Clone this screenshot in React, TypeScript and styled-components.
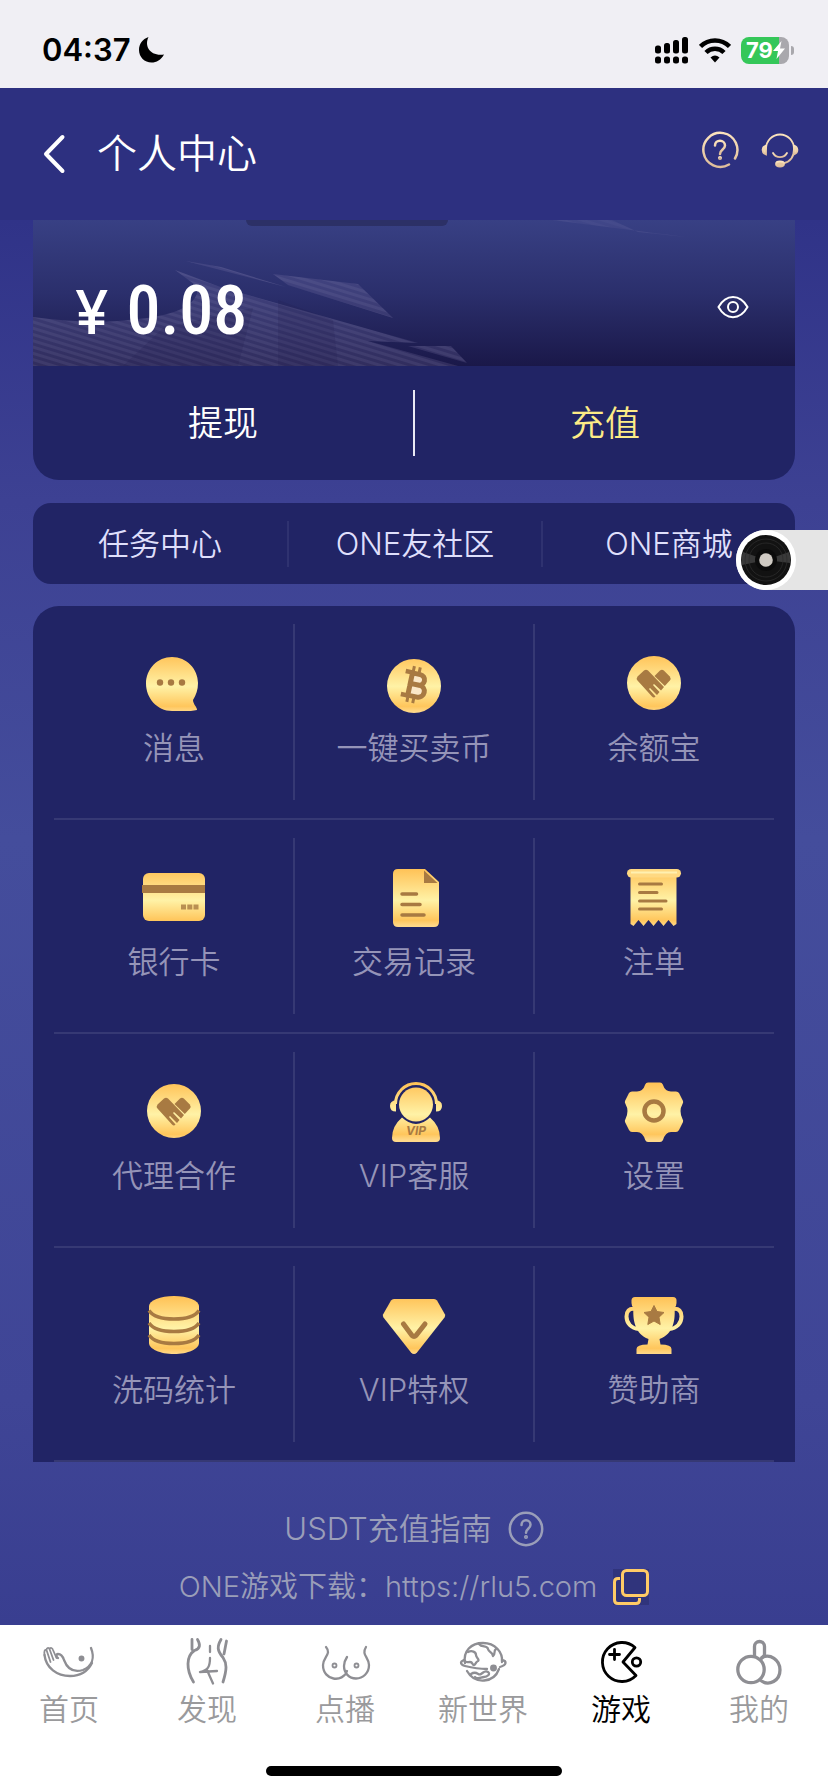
import React from "react";
import styled, { createGlobalStyle, css } from "styled-components";

const GlobalStyle = createGlobalStyle`
  *, *::before, *::after { box-sizing: border-box; }
  body {
    margin: 0;
    background: #ffffff;
    font-family: Inter, "Noto Sans CJK SC", sans-serif;
  }
  button { font: inherit; color: inherit; background: none; border: 0; padding: 0; cursor: pointer; }
  a { color: inherit; text-decoration: none; }
  svg { display: block; flex: none; }
`;

const panel = "#212465";
const hairline = "#363974";

const Page = styled.div`
  position: relative;
  display: flex;
  flex-direction: column;
  min-height: 100vh;
  font-weight: 350;
`;

const StatusBar = styled.div`
  display: flex;
  align-items: center;
  justify-content: space-between;
  height: 88px;
  padding: 12px 34px 0 42px;
  background: #f0eff4;
  color: #000;
`;

const StatusGroup = styled.div<{ $gap: number }>`
  display: flex;
  align-items: center;
  gap: ${(p) => p.$gap}px;
`;

const Clock = styled.span`
  font-size: 31px;
  line-height: 40px;
  font-weight: 600;
`;

const Battery = styled.div`
  position: relative;
  display: flex;
  align-items: center;
  width: 48px;
  height: 27px;
  margin-right: 5px;
  padding-left: 5px;
  border-radius: 8px;
  background: linear-gradient(90deg, #35c759 79%, #a9a8ad 79%);
  color: #fff;
  font-size: 22px;
  font-weight: 700;
  line-height: 27px;
  &::after {
    content: "";
    position: absolute;
    right: -5px;
    top: 9px;
    width: 3px;
    height: 9px;
    border-radius: 0 4px 4px 0;
    background: #a9a8ad;
  }
`;

const Header = styled.header`
  display: flex;
  align-items: center;
  height: 132px;
  padding: 0 29px 0 40px;
  background: #2d3080;
`;

const IconButton = styled.button`
  display: flex;
  align-items: center;
  justify-content: center;
`;

const Title = styled.h1`
  flex: 1;
  margin: 0 0 0 30px;
  color: #fff;
  font-size: 40px;
  line-height: 48px;
  font-weight: 350;
`;

const HeaderTools = styled.div`
  display: flex;
  gap: 22px;
  padding-bottom: 8px;
`;

const Content = styled.main`
  flex: 1;
  display: flex;
  flex-direction: column;
  padding: 0 33px 18px;
  background: linear-gradient(180deg, #303388 0%, #3d4193 20%, #444d9c 44%, #3f4596 84%, #393e90 100%);
`;

const Wallet = styled.section`
  overflow: hidden;
  border-radius: 0 0 26px 26px;
  background: ${panel};
`;

const Banner = styled.div`
  position: relative;
  display: flex;
  align-items: center;
  justify-content: space-between;
  height: 146px;
  padding: 28px 46px 0 42px;
  overflow: hidden;
  background: linear-gradient(180deg, #384084 0%, #2b2f6c 50%, #1a1849 100%);
`;

const BannerArt = styled.svg`
  position: absolute;
  left: 0;
  bottom: 0;
`;

const BannerTab = styled.span`
  position: absolute;
  top: 0;
  left: 28%;
  width: 202px;
  height: 6px;
  border-radius: 0 0 20px 20px;
  background: #2c3066;
`;

const Balance = styled.div`
  position: relative;
  display: flex;
  align-items: baseline;
  gap: 18px;
  padding-top: 8px;
  color: #fff;
  font-family: "Roboto Condensed", "Liberation Sans Narrow", sans-serif;
  font-weight: 500;
  font-size: 68px;
  line-height: 72px;
`;

const Currency = styled.span`
  font-family: Inter, sans-serif;
  font-size: 60px;
  line-height: 72px;
`;

const Actions = styled.div`
  display: grid;
  grid-template-columns: 1fr 2px 1fr;
  align-items: center;
  height: 114px;
`;

const ActionButton = styled.button<{ $gold?: boolean }>`
  height: 100%;
  font-size: 35px;
  line-height: 48px;
  color: ${(p) => (p.$gold ? "#fdeb86" : "#ffffff")};
`;

const ActionRule = styled.span`
  height: 66px;
  background: #e9e9f4;
`;

const Links = styled.nav`
  display: grid;
  grid-template-columns: repeat(3, 1fr);
  align-items: center;
  height: 81px;
  margin-top: 23px;
  border-radius: 18px;
  background: ${panel};
`;

const QuickLink = styled.a`
  display: flex;
  align-items: center;
  justify-content: center;
  height: 46px;
  color: #dfdffb;
  font-size: 31px;
  line-height: 40px;
  & + & { border-left: 2px solid #2f3270; }
`;

const Menu = styled.section`
  display: grid;
  grid-template-columns: repeat(3, 1fr);
  margin-top: 22px;
  padding: 0 21px;
  border-radius: 26px 26px 0 0;
  background: ${panel};
`;

const MenuCell = styled.a<{ $divided: boolean }>`
  position: relative;
  display: flex;
  flex-direction: column;
  align-items: center;
  height: 214px;
  padding-top: 46px;
  border-bottom: 2px solid ${hairline};
  color: #9594b8;
  font-size: 31px;
  line-height: 40px;
  gap: 12px;
  ${(p) =>
    p.$divided &&
    css`
      &::before {
        content: "";
        position: absolute;
        left: -1px;
        top: 18px;
        bottom: 18px;
        width: 2px;
        background: ${hairline};
      }
    `}
`;

const Notes = styled.footer`
  display: flex;
  flex-direction: column;
  align-items: center;
  gap: 18px;
  padding-top: 47px;
  color: #9a9eb9;
  line-height: 40px;
`;

const Note = styled.div<{ $size: number }>`
  display: flex;
  align-items: center;
  gap: 16px;
  font-size: ${(p) => p.$size}px;
`;

const TabBar = styled.nav`
  display: grid;
  grid-template-columns: repeat(6, 1fr);
  height: 141px;
  padding-top: 12px;
  background: #fff;
`;

const Tab = styled.a<{ $active: boolean }>`
  display: flex;
  flex-direction: column;
  align-items: center;
  gap: 4px;
  font-size: 30px;
  line-height: 40px;
  color: ${(p) => (p.$active ? "#000" : "#9a9a9c")};
  svg { color: ${(p) => (p.$active ? "#000" : "#8e8e93")}; }
`;

const HomeArea = styled.div`
  display: flex;
  justify-content: center;
  height: 26px;
  background: #fff;
`;

const HomeIndicator = styled.span`
  width: 296px;
  height: 10px;
  border-radius: 5px;
  background: #000;
`;

const MusicButton = styled.button`
  position: absolute;
  top: 530px;
  right: 0;
  width: 92px;
  height: 60px;
  border-radius: 30px 0 0 30px;
  background: #e5e5e5;
`;

const BROWN = "#a87a42";
const GOLD = "url(#gold)";

const Defs = () => (
  <svg width="0" height="0" style={{ position: "absolute" }} aria-hidden="true">
    <defs>
      <linearGradient id="gold" gradientUnits="userSpaceOnUse" x1="0" y1="3" x2="0" y2="60">
        <stop offset="0" stopColor="#ffc257" />
        <stop offset="0.55" stopColor="#fff2a6" />
        <stop offset="0.9" stopColor="#ffc65c" />
        <stop offset="1" stopColor="#ffd98a" />
      </linearGradient>
      <linearGradient id="sand" x1="0" y1="0" x2="0" y2="1">
        <stop offset="0" stopColor="#fbe3bd" />
        <stop offset="1" stopColor="#dfbe9b" />
      </linearGradient>
      <pattern id="stripes" width="12" height="6" patternUnits="userSpaceOnUse" patternTransform="rotate(17)">
        <rect width="12" height="6" fill="#8a82b4" fillOpacity="0.2" />
        <rect width="12" height="3" fill="#8f88ba" fillOpacity="0.13" />
      </pattern>
    </defs>
  </svg>
);

const Glyph = ({ children }: { children: React.ReactNode }) => (
  <svg width="64" height="64" viewBox="0 0 64 64" fill={GOLD} aria-hidden="true">
    {children}
  </svg>
);

const ChatGlyph = () => (
  <Glyph>
    <path d="M30 5C44.500 5 56 17 56 31c0 7-2 12-5 17 0 4 4 7 4 10-6 1.500-15 1-25 1C15 59 4 46 4 31.500 4 17 15.500 5 30 5z" />
    <g fill={BROWN}>
      <circle cx="18" cy="30.500" r="3.200" />
      <circle cx="29" cy="30.500" r="3.200" />
      <circle cx="40" cy="30.500" r="3.200" />
    </g>
  </Glyph>
);

const BitcoinGlyph = () => (
  <Glyph>
    <circle cx="32" cy="34" r="27" />
    <g transform="rotate(12 32 33)" fill="none" stroke={BROWN}>
      <path d="M28 21.500h8a5.300 5.300 0 0 1 0 10.700h-8zM28 32.200h9.500a6 6 0 0 1 0 12H28z" fill="#fbe8c8" strokeWidth="5" />
      <path d="M21 21h8M21 44.500h8" strokeWidth="4.500" />
      <path d="M28.500 14.500v6M34.500 14.500v6M28.500 45v6M34.500 45v6" strokeWidth="3" />
    </g>
  </Glyph>
);

const HandsGlyph = () => (
  <Glyph>
    <circle cx="32" cy="31" r="27" />
    <g fill={BROWN}>
      <path d="M15.500 24.500l6.500-6q2-1.500 4 0L42 35l-3 3.500-7-6.500-1 1 6.500 7-2.500 3-7-7-1 1 6.500 7.500q-1.500 2-3.500 0L15.500 28.500q-1.500-2 0-4z" />
      <path d="M32.500 24l5.500-5.500q2-1.500 3.800 0l6 6q1.500 2 0 4l-5 5.500z" />
    </g>
  </Glyph>
);

const CardGlyph = () => (
  <Glyph>
    <rect x="1" y="7" width="62" height="48" rx="6" />
    <path d="M0 19h63v8H0z" fill={BROWN} />
    <path d="M39 38.500h5v5h-5zM45.300 38.500h5v5h-5zM51.500 38.500h5v5h-5z" fill={BROWN} opacity="0.800" />
  </Glyph>
);

const DocGlyph = () => (
  <Glyph>
    <path d="M16 3h27l14 13v40q0 5-5 5H16q-5 0-5-5V8q0-5 5-5z" />
    <path d="M42 4.500V17h13.500z" fill={BROWN} />
    <path d="M20 28h14.500M20 38.500h18M20 49h22" stroke={BROWN} strokeWidth="3.500" strokeLinecap="round" />
  </Glyph>
);

const ReceiptGlyph = () => (
  <Glyph>
    <path d="M8.500 6h46v52l-3 2-5-6-5 6-5-6-5 6-5-6-5 6-5-6-5 6-3-2z" />
    <rect x="5" y="3" width="54" height="8.500" rx="4.200" fill="#ffd982" />
    <path d="M9 6.500h46" stroke="#fff0b0" strokeWidth="2" />
    <path d="M17.500 18h22M17.500 26.500H35M17.500 35H44M17.500 43h22" stroke={BROWN} strokeWidth="3" strokeLinecap="round" />
  </Glyph>
);

const VipGlyph = () => (
  <Glyph>
    <path d="M13.500 24a20.500 20.500 0 0 1 41 0" fill="none" stroke={GOLD} strokeWidth="3" />
    <path d="M14 20.500v11q-6 0-6-5.500t6-5.500zM54 20.500v11q6 0 6-5.500t-6-5.500z" />
    <path d="M20 37.500q14 13 28 0Q58 46 58 58q0 4-4 4H14q-4 0-4-4 0-12 10-20.500z" />
    <circle cx="34" cy="24.500" r="17" />
    <text x="34" y="55" textAnchor="middle" fontFamily="Inter, sans-serif" fontSize="12" fontWeight="700" fontStyle="italic" fill={BROWN}>VIP</text>
  </Glyph>
);

const GearGlyph = () => (
  <Glyph>
    <path d="M26 2.500h12q2 0 2.800 2 2.200 7 8.200 7h5q2 0 3 1.500l4 8q.5 1.500-.5 3-4 7 0 15 1 1.500.5 3l-4 8q-1 2-3 2h-5q-5.500 0-8 8-.800 2-3 2H26q-2 0-2.800-2-2.500-8-8.200-8h-5q-2 0-3-2l-4-8q-.5-1.500.5-3 4-8 0-15-1-1.500-.5-3l4-8q1-1.500 3-1.500h5q6 0 8.200-7 .800-2 2.800-2z" />
    <circle cx="32" cy="31" r="9.500" fill="none" stroke={BROWN} strokeWidth="4.500" />
  </Glyph>
);

const CoinsGlyph = () => (
  <Glyph>
    <path d="M7 12v37c0 6 11 11 25 11s25-5 25-11V12z" />
    <ellipse cx="32" cy="12" rx="25" ry="10" />
    <path d="M7 16.500c4 6 14 8.500 25 8.500s21-2.500 25-8.500M7 29c4 6 14 8.500 25 8.500S53 35 57 29M7 41c4 6 14 8.500 25 8.500S53 47 57 41" fill="none" stroke={BROWN} strokeWidth="3.500" />
  </Glyph>
);

const DiamondGlyph = () => (
  <Glyph>
    <path d="M12 5h40q2 0 3 1.500l8 14q.5 1.500-.5 3L35 58.500q-3 3-6 0L1.500 23.500q-1-1.500-.5-3l8-14Q10 5 12 5z" />
    <path d="M21.500 30L30 41.500q2 2 4 0L43 30" fill="none" stroke={BROWN} strokeWidth="5" strokeLinecap="round" strokeLinejoin="round" />
  </Glyph>
);

const TrophyGlyph = () => (
  <Glyph>
    <path d="M13 3h38q3.500 0 3.500 3.500V9q0 3.500-2 4.500H11.500q-2-1-2-4.500V6.500Q9.500 3 13 3z" />
    <path d="M11.500 13h41c1 13-1 27-15 32l1 5.500q11 0 11 4.500v5h-35v-5q0-4.500 11-4.500l1-5.500C13 40 10.500 26 11.500 13z" />
    <path d="M13 15c-6-1-8.500 2.500-8.500 7.500C4.500 29 9 34.500 17 35M51 15c6-1 8.500 2.500 8.500 7.500C59.500 29 55 34.500 47 35" fill="none" stroke={GOLD} strokeWidth="4" />
    <path d="M32 11.500l3 6 7 1-5 4.700 1.200 7.300-6.200-3.500-6.200 3.500 1.200-7.300-5-4.700 7-1z" fill={BROWN} stroke={BROWN} strokeLinejoin="round" />
  </Glyph>
);

const TabGlyph = ({ width = 2.3, children }: { width?: number; children: React.ReactNode }) => (
  <svg width="54" height="48" viewBox="0 0 54 48" fill="none" stroke="currentColor" strokeWidth={width} strokeLinecap="round" strokeLinejoin="round" aria-hidden="true">
    {children}
  </svg>
);

const HomeTab = () => (
  <TabGlyph>
    <path d="M49 11c4 10 1 18-8 22-10 3-16-2-19-10-1-3-3-6-6-6-2 0-2 3 0 4" />
    <path d="M2.500 18C4 31 15 39 28 39c11 0 18-5 22-13" />
    <path d="M2.500 18c-.5-3 0-6 2-5l4 12M4.500 13c0-2 2-3 3-1l4 11M7.500 12c1-2 3-1 3.500 1l3.500 8" strokeWidth="1.800" />
    <circle cx="39.500" cy="21.500" r="1.800" fill="currentColor" />
  </TabGlyph>
);

const DiscoverTab = () => (
  <TabGlyph width={2.8}>
    <path d="M12 2.500v10M17.500 2.500c3 5 3 9-3 11C6 19 6 33 13.500 45" />
    <path d="M41 2.500c-4 7-4 11 2 18 4 6 4 12 0 24.500M46.500 4l-2.500 13" />
    <path d="M30 9v6M30 21c0 9-2 12-10 14l17-1M27 33l6 13.500" strokeWidth="2.300" />
  </TabGlyph>
);

const VideoTab = () => (
  <TabGlyph>
    <path d="M8 10c6 7-3 10-3 18 0 16 20 18 24 6M48 10c-5 8 3 10 3 18 0 8-6 13.500-13 13.500S26 36 26 29c0-3 1-6 3-9" />
    <circle cx="16.500" cy="28.500" r="2" strokeWidth="1.800" />
    <circle cx="38.500" cy="28.500" r="2" strokeWidth="1.800" />
  </TabGlyph>
);

const WorldTab = () => (
  <TabGlyph>
    <path d="M9 26C7 14 15 6 27 6s20 9 19 19M11 34c8 14 27 12 32-2" />
    <path d="M8 23c-5 2-3 5 1 6 8 2 14 3 22 3M46 23c5 1 5 5-2 7" />
    <path d="M12 15c4-2 8 0 8 3s4 4 2 6c-3 1-2 4-4 4s-1-3-4-3-5 1-6-2M23 7c3 4 8 1 9 5s4 2 5 7c3-2 0-5 3-7M15 37c6-4 7 2 10 0s4-4 7-2-1 5-4 5-6 3-9 0" />
    <circle cx="37.500" cy="31" r="2.300" fill="currentColor" />
  </TabGlyph>
);

const GameTab = () => (
  <TabGlyph width={2.8}>
    <path d="M41 10.500A19.500 19.500 0 1 0 42 38.500L29 25z" />
    <path d="M20.500 12.500v10M15.500 17.500h10" />
    <circle cx="42.500" cy="25" r="4.200" />
  </TabGlyph>
);

const MineTab = () => (
  <TabGlyph width={3.3}>
    <circle cx="19" cy="32.500" r="13.200" />
    <path d="M30 20.500c8-4 18 2 18 12.500 0 11-11 16-18.500 11" />
    <path d="M22.500 19V9.500a5 5 0 0 1 10 0V18l-4 4.500" />
  </TabGlyph>
);

const menu = [
  { label: "消息", Icon: ChatGlyph },
  { label: "一键买卖币", Icon: BitcoinGlyph },
  { label: "余额宝", Icon: HandsGlyph },
  { label: "银行卡", Icon: CardGlyph },
  { label: "交易记录", Icon: DocGlyph },
  { label: "注单", Icon: ReceiptGlyph },
  { label: "代理合作", Icon: HandsGlyph },
  { label: "VIP客服", Icon: VipGlyph },
  { label: "设置", Icon: GearGlyph },
  { label: "洗码统计", Icon: CoinsGlyph },
  { label: "VIP特权", Icon: DiamondGlyph },
  { label: "赞助商", Icon: TrophyGlyph },
];

const tabs = [
  { label: "首页", Icon: HomeTab },
  { label: "发现", Icon: DiscoverTab },
  { label: "点播", Icon: VideoTab },
  { label: "新世界", Icon: WorldTab },
  { label: "游戏", Icon: GameTab, active: true },
  { label: "我的", Icon: MineTab },
];

export default function App() {
  return (
    <Page>
      <GlobalStyle />
      <Defs />
      <StatusBar>
        <StatusGroup $gap={8}>
          <Clock>04:37</Clock>
          <svg width="26" height="26" viewBox="0 0 26 26" aria-hidden="true">
            <path d="M9.500 0C5 9 11 19.500 25 17.500 22 23 17.500 25.500 12.500 25.500 5.500 25.500 0 20 0 13 0 7 3.500 2 9.500 0z" />
          </svg>
        </StatusGroup>
        <StatusGroup $gap={10}>
          <svg width="34" height="27" viewBox="0 0 34 27" aria-hidden="true">
            <rect x="0" y="8.500" width="6" height="8" rx="2.500" />
            <rect x="9" y="6" width="6" height="10.500" rx="2.500" />
            <rect x="18" y="3" width="6" height="13.500" rx="2.500" />
            <rect x="27" y="0" width="6" height="16.500" rx="2.500" />
            <rect x="0" y="19.500" width="6" height="7" rx="2.500" />
            <rect x="9" y="19.500" width="6" height="7" rx="2.500" />
            <rect x="18" y="19.500" width="6" height="7" rx="2.500" />
            <rect x="27" y="19.500" width="6" height="7" rx="2.500" />
          </svg>
          <svg width="32" height="25" viewBox="0 0 32 25" aria-hidden="true">
            <g fill="none" stroke="#000" strokeWidth="4.500">
              <path d="M1.500 8.500a20.500 20.500 0 0 1 29 0" />
              <path d="M7 14.500a12.700 12.700 0 0 1 18 0" />
            </g>
            <path d="M11.500 19.500q4.500-4 9 0L16 24.500z" />
          </svg>
          <Battery>
            79
            <svg width="12" height="18" viewBox="0 0 12 18" fill="#fff" aria-hidden="true">
              <path d="M8.500 0L0 10h5L3.500 18 12 7.500H7z" />
            </svg>
          </Battery>
        </StatusGroup>
      </StatusBar>

      <Header>
        <IconButton aria-label="返回">
          <svg width="27" height="40" viewBox="0 0 27 40" fill="none" stroke="#fff" strokeWidth="4" strokeLinecap="round" strokeLinejoin="round">
            <path d="M22.500 3L6 20l16.500 17" />
          </svg>
        </IconButton>
        <Title>个人中心</Title>
        <HeaderTools>
          <IconButton aria-label="帮助">
            <svg width="38" height="38" viewBox="0 0 38 38" fill="none" stroke="url(#sand)" strokeWidth="2.500" strokeLinecap="round">
              <path d="M28 33.500A17 17 0 1 1 34 27.500" />
              <path d="M14 14.500c0-3 2.300-4.700 5-4.700s5 2 5 4.700c0 4-5 4-5 8.500" />
              <circle cx="19" cy="27" r="0.800" />
            </svg>
          </IconButton>
          <IconButton aria-label="客服">
            <svg width="38" height="38" viewBox="0 0 38 38" fill="none" stroke="url(#sand)" strokeWidth="1.800" strokeLinecap="round">
              <path d="M5 18a14 14.500 0 0 1 28 0c0 9-4 13-11 14.500" />
              <path d="M12 22c3 5.500 11 5.500 14 0" />
              <path d="M5 14.500c-4 1-5 7 0 9zM33 14.500c4 1 5 7 0 9z" fill="#f2d8b0" />
              <ellipse cx="19" cy="33" rx="4" ry="2.500" fill="#e6c6a0" />
            </svg>
          </IconButton>
        </HeaderTools>
      </Header>

      <Content>
        <Wallet>
          <Banner>
            <BannerArt width="700" height="146" viewBox="0 0 700 146" aria-hidden="true">
              <g fill="url(#stripes)">
                <path d="M0 97q60 8 105 2 60-6 60-32L142 50l48 18 195 55-50-2 90 25H0z" />
                <path d="M240 54l85 10 35 34-105-33z" />
                <path d="M153 41l35 6 65 20z" />
                <path d="M375 126h43l16 17z" />
                <path d="M519 0h60l26 12 48 5z" opacity="0.500" />
              </g>
              <path d="M90 146l40-38 90-20-15 58zM245 80l55 20 5 46h-60z" fill="#241f52" opacity="0.200" />
            </BannerArt>
            <BannerTab />
            <Balance>
              <Currency>¥</Currency>
              <span>0.08</span>
            </Balance>
            <IconButton aria-label="显示余额">
              <svg width="32" height="24" viewBox="0 0 32 24" fill="none" stroke="#fff" strokeWidth="2">
                <path d="M1.500 12C9-1.500 23-1.500 30.500 12 23 25.500 9 25.500 1.500 12z" />
                <circle cx="16" cy="12" r="5" />
              </svg>
            </IconButton>
          </Banner>
          <Actions>
            <ActionButton>提现</ActionButton>
            <ActionRule />
            <ActionButton $gold>充值</ActionButton>
          </Actions>
        </Wallet>

        <Links>
          <QuickLink href="#tasks">任务中心</QuickLink>
          <QuickLink href="#community">ONE友社区</QuickLink>
          <QuickLink href="#mall">ONE商城</QuickLink>
        </Links>

        <Menu>
          {menu.map(({ label, Icon }, i) => (
            <MenuCell key={label} href={`#menu-${i}`} $divided={i % 3 !== 0}>
              <Icon />
              {label}
            </MenuCell>
          ))}
        </Menu>

        <Notes>
          <Note $size={31}>
            <a href="#usdt">USDT充值指南</a>
            <svg width="36" height="36" viewBox="0 0 36 36" fill="none" stroke="#9a9eb9" strokeWidth="2.500" strokeLinecap="round" aria-hidden="true">
              <circle cx="18" cy="18" r="16.200" />
              <path d="M13.500 14c0-3 2-4.700 4.500-4.700s4.500 2 4.500 4.500c0 4-4.500 4-4.500 8" />
              <circle cx="18" cy="26" r="0.800" />
            </svg>
          </Note>
          <Note $size={29}>
            <span>
              ONE游戏下载：<a href="https://rlu5.com">https://rlu5.com</a>
            </span>
            <IconButton aria-label="复制">
              <svg width="36" height="36" viewBox="0 0 36 36" fill="none" stroke="#ffcb66" strokeWidth="3">
                <path d="M0 0h36v36H0z" fill="#30347c" stroke="none" />
                <rect x="9.500" y="1.500" width="25" height="25" rx="4" />
                <path d="M7 9.500H5q-3.500 0-3.500 3.500v18q0 3.500 3.500 3.500h18q3.500 0 3.500-3.500v-2" />
              </svg>
            </IconButton>
          </Note>
        </Notes>
      </Content>

      <TabBar>
        {tabs.map(({ label, Icon, active }, i) => (
          <Tab key={label} href={`#tab-${i}`} $active={!!active}>
            <Icon />
            {label}
          </Tab>
        ))}
      </TabBar>
      <HomeArea>
        <HomeIndicator />
      </HomeArea>

      <MusicButton aria-label="音乐">
        <svg width="60" height="60" viewBox="0 0 60 60">
          <circle cx="30" cy="30" r="30" fill="#fff" />
          <circle cx="30" cy="30" r="25" fill="#121212" />
          <path d="M30 30L7 22a24 24 0 0 0-1 13zM30 30l23-8a24 24 0 0 1 1 11z" fill="#4a4a4a" opacity="0.700" />
          <g fill="none" stroke="#2c2c2c" strokeWidth="0.800">
            <circle cx="30" cy="30" r="21" />
            <circle cx="30" cy="30" r="17" />
          </g>
          <circle cx="30" cy="30" r="11" fill="#0b0b0b" />
          <circle cx="30" cy="30" r="6.800" fill="#cfcac3" />
        </svg>
      </MusicButton>
    </Page>
  );
}
